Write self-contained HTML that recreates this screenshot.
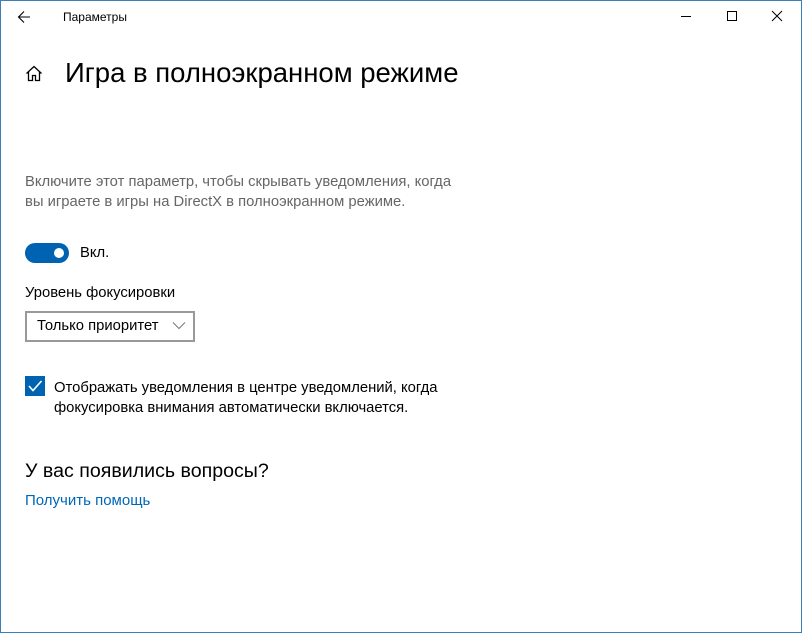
<!DOCTYPE html>
<html><head><meta charset="utf-8"><style>
*{margin:0;padding:0;box-sizing:border-box}
body{width:802px;height:633px;overflow:hidden;background:#fff;font-family:"Liberation Sans","Noto Sans CJK SC",sans-serif;color:#000;position:relative}
.frame{position:absolute;left:0;top:0;width:802px;height:633px;border:1px solid #3b7fb8;}
.a{position:absolute;white-space:nowrap}
</style></head><body>
<div class="frame"></div>
<svg class="a" style="left:17px;top:10px" width="14" height="14" viewBox="0 0 14 14"><path d="M13 7H1.5M7 1.5L1.5 7L7 12.5" stroke="#000" stroke-width="1.1" fill="none"/></svg>
<div class="a" style="left:63px;top:10px;font-size:12px">Параметры</div>
<svg class="a" style="left:680px;top:10px" width="12" height="12"><path d="M1 6.5H11" stroke="#000" stroke-width="1"/></svg>
<svg class="a" style="left:726px;top:10px" width="12" height="12"><rect x="1.5" y="1.5" width="9" height="9" stroke="#000" fill="none"/></svg>
<svg class="a" style="left:771px;top:10px" width="12" height="12"><path d="M1 1L11 11M11 1L1 11" stroke="#000" stroke-width="1"/></svg>
<svg class="a" style="left:25px;top:65px" width="18" height="17" viewBox="0 0 18 17"><path d="M1.5 8.5L9 1.5L16.5 8.5M3.5 6.8V15.5H7.5V10.5H10.5V15.5H14.5V6.8" stroke="#000" stroke-width="1.3" fill="none"/></svg>
<div class="a" style="left:65px;top:57px;font-size:27.5px;font-weight:300">Игра в полноэкранном режиме</div>
<div class="a" style="left:25px;top:172px;font-size:14.8px;color:#666;line-height:20px">Включите этот параметр, чтобы скрывать уведомления, когда<br>вы играете в игры на DirectX в полноэкранном режиме.</div>
<div class="a" style="left:25px;top:243px;width:44px;height:20px;border-radius:10px;background:#0063b1"><div style="position:absolute;right:5px;top:5px;width:10px;height:10px;border-radius:5px;background:#fff"></div></div>
<div class="a" style="left:80px;top:245px;font-size:14.8px">Вкл.</div>
<div class="a" style="left:25px;top:285px;font-size:14.8px">Уровень фокусировки</div>
<div class="a" style="left:25px;top:311px;width:170px;height:31px;border:2px solid #999"></div>
<div class="a" style="left:37px;top:318px;font-size:14.8px">Только приоритет</div>
<svg class="a" style="left:172px;top:321px" width="14" height="9"><path d="M1 1.5L7 7.5L13 1.5" stroke="#777" fill="none"/></svg>
<div class="a" style="left:25px;top:376px;width:20px;height:20px;background:#0063b1"></div>
<svg class="a" style="left:25px;top:376px" width="20" height="20"><path d="M4 10L8 14.5L16.5 5" stroke="#fff" stroke-width="1.6" fill="none"/></svg>
<div class="a" style="left:54px;top:378px;font-size:14.8px;line-height:20px">Отображать уведомления в центре уведомлений, когда<br>фокусировка внимания автоматически включается.</div>
<div class="a" style="left:25px;top:460px;font-size:19.6px">У вас появились вопросы?</div>
<div class="a" style="left:25px;top:492px;font-size:15px;color:#0067b8">Получить помощь</div>
</body></html>
